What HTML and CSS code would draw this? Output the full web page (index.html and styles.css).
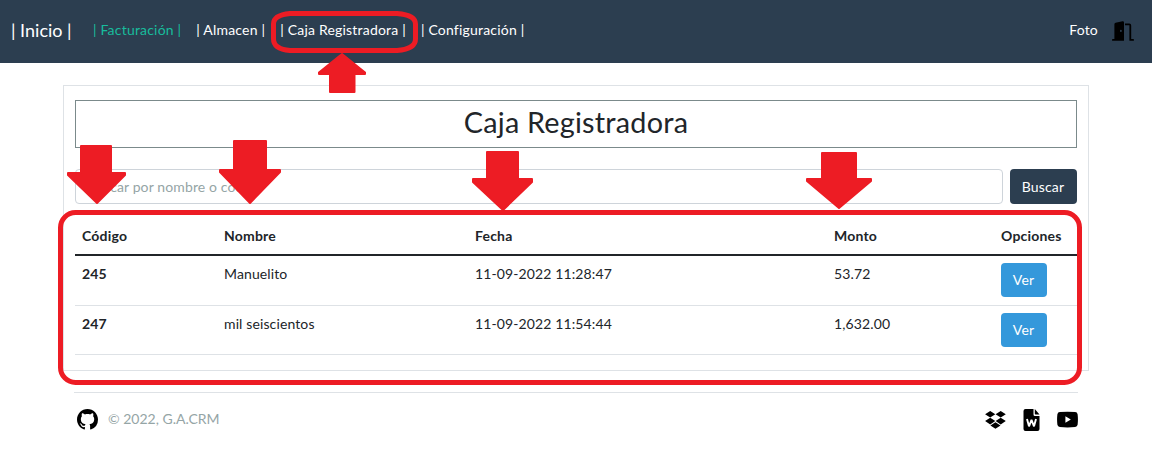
FILE: index.html
```
<!DOCTYPE html>
<html lang="es">
<head>
<meta charset="utf-8">
<title>Caja Registradora</title>
<link rel="stylesheet" href="styles.css">
</head>
<body>
<nav class="navbar">
  <a class="brand">| Inicio |</a>
  <a class="nav-link active">| Facturación |</a>
  <a class="nav-link">| Almacen |</a>
  <a class="nav-link">| Caja Registradora |</a>
  <a class="nav-link">| Configuración |</a>
  <a class="nav-link user">Foto</a>
  <svg class="icon door" viewBox="0 0 22 22"><path fill-rule="evenodd" d="M.8 19H2.400V4.200Q2.400 3 3.600 2.700L10.500 1.200Q12 1 12 2.400V20.800H.8Q0 20.800 0 19.900T.8 19ZM8.900 9.800a.9 1.100 0 1 0 0 2.200a.9 1.100 0 1 0 0-2.200ZM13 3.500H17.300Q19.200 3.500 19.200 5.400V19H21.200Q22 19 22 19.900T21.200 20.800H17.400V5.300H13Z"/></svg>
</nav>
<main class="card">
  <h1 class="title">Caja Registradora</h1>
  <form class="search">
    <input class="field" type="text" placeholder="Buscar por nombre o codigo">
    <button class="btn dark" type="button">Buscar</button>
  </form>
  <table class="table">
    <colgroup><col class="c1"><col class="c2"><col class="c3"><col class="c4"><col class="c5"></colgroup>
    <thead><tr><th>Código</th><th>Nombre</th><th>Fecha</th><th>Monto</th><th>Opciones</th></tr></thead>
    <tbody>
      <tr class="first"><th>245</th><td>Manuelito</td><td>11-09-2022 11:28:47</td><td>53.72</td><td><button class="btn info" type="button">Ver</button></td></tr>
      <tr><th>247</th><td>mil seiscientos</td><td>11-09-2022 11:54:44</td><td>1,632.00</td><td><button class="btn info" type="button">Ver</button></td></tr>
    </tbody>
  </table>
</main>
<footer class="footer">
  <svg class="icon" viewBox="0 0 16 16"><path d="M8 0C3.58 0 0 3.58 0 8c0 3.54 2.29 6.53 5.47 7.59.4.07.55-.17.55-.38 0-.19-.01-.82-.01-1.49-2.01.37-2.53-.49-2.69-.94-.09-.23-.48-.94-.82-1.13-.28-.15-.68-.52-.01-.53.63-.01 1.08.58 1.23.82.72 1.21 1.87.87 2.33.66.07-.52.28-.87.51-1.07-1.78-.2-3.64-.89-3.64-3.95 0-.87.31-1.59.82-2.15-.08-.2-.36-1.02.08-2.12 0 0 .67-.21 2.2.82.64-.18 1.32-.27 2-.27.68 0 1.36.09 2 .27 1.53-1.04 2.2-.82 2.2-.82.44 1.1.16 1.92.08 2.12.51.56.82 1.27.82 2.15 0 3.07-1.87 3.75-3.65 3.95.29.25.54.73.54 1.48 0 1.07-.01 1.93-.01 2.2 0 .21.15.46.55.38A8.012 8.012 0 0 0 16 8c0-4.42-3.58-8-8-8z"/></svg>
  <span class="copy">© 2022, G.A.CRM</span>
  <div class="social">
    <svg class="icon" viewBox="0 0 21 21"><path d="M5.200 1.900 10.300 5.200 5.200 8.500 .1 5.200ZM15.700 1.900 20.800 5.200 15.700 8.500 10.600 5.200ZM5.200 8.800 10.300 12.100 5.200 15.400 .1 12.100ZM15.700 8.800 20.800 12.100 15.700 15.400 10.600 12.100ZM5.400 16.500 10.450 13.200 15.500 16.500 10.450 19.800Z"/></svg>
    <svg class="icon word" viewBox="0 0 16 22"><path d="M2 0H10V5.500Q10 7 11.500 7H16V20Q16 22 14 22H2Q0 22 0 20V2Q0 0 2 0ZM11.300 0 16 5.500H12Q11.300 5.500 11.300 4.700Z"/><path class="letter" d="M3.500 10 5.500 17.300 8 10.800 10.500 17.300 12.500 10"/></svg>
    <svg class="icon" viewBox="0 0 16 16"><path fill-rule="evenodd" d="M2.200 2.350Q8 1.650 13.800 2.350A2 2 0 0 1 15.700 4Q16.200 8 15.700 12a2 2 0 0 1-1.900 1.650Q8 14.350 2.200 13.650A2 2 0 0 1 .3 12Q-.2 8 .3 4A2 2 0 0 1 2.200 2.350ZM6.400 5.500v5l4.150-2.500Z"/></svg>
  </div>
</footer>
<svg class="marks" viewBox="0 0 1152 453">
  <path class="ring" d="M290 13.500H397Q415.500 15 415.500 24V39Q415.500 49 397 50.500H290Q273.500 49 273.500 39V24Q273.500 15 290 13.500Z"/>
  <rect class="ring" x="60.500" y="212.500" width="1019" height="170" rx="15"/>
  <path class="arrow" d="M342 54 365 72.500V74H354.500V92H330V74H319V72.500Z"/>
  <path class="arrow" d="M81 146H111V173H125V175L97 203 68 175V173H81Z"/>
  <path class="arrow" d="M234 141H266V170H280V172L250 203 220 172V170H234Z"/>
  <path class="arrow" d="M487 152H518V179H532V182L503 210 473 182V179H487Z"/>
  <path class="arrow" d="M822 153H856V179H871V181L839 208 807 181V179H822Z"/>
</svg>
</body>
</html>
```
FILE: styles.css
```
* { box-sizing: border-box; }
body {
  margin: 0;
  height: 453px;
  position: relative;
  overflow: hidden;
  background: #fff;
  color: #212529;
  font: 400 14px/21px Lato, sans-serif;
}
.navbar {
  display: flex;
  align-items: center;
  height: 63px;
  padding: 0 18px 4px 11px;
  background: #2c3e50;
  color: #fff;
}
.brand { font-size: 18px; width: 82px; padding-top: 2px; white-space: nowrap; }
.nav-link { margin-right: 15px; white-space: nowrap; letter-spacing: .2px; }
.nav-link.active { color: #18bc9c; }
.nav-link.user { margin-left: auto; margin-right: 14px; }
.icon { width: 21px; height: 21px; flex: none; display: block; }
.door { width: 22px; height: 22px; position: relative; top: 1px; }
.card {
  width: 1026px;
  height: 286px;
  margin: 22px 0 0 63px;
  padding: 14px 11px;
  border: 1px solid #dee2e6;
}
.title {
  margin: 0;
  height: 48px;
  border: 1px solid #7b8a8b;
  font-size: 28.800px;
  font-weight: 400;
  line-height: 43px;
  letter-spacing: .22px;
  text-align: center;
}
.search { display: flex; gap: 7px; margin: 21px 0 14px; }
.field {
  flex: 1;
  height: 35px;
  padding: 0 11px;
  border: 1px solid #ced4da;
  border-radius: 4px;
  font: inherit;
  letter-spacing: .12px;
}
.field::placeholder { color: #95a5a6; opacity: 1; }
.btn {
  display: block;
  height: 35px;
  padding: 0 1px 0 0;
  border: 0;
  border-radius: 4px;
  color: #fff;
  font: inherit;
  letter-spacing: .15px;
}
.dark { width: 67px; background: #2c3e50; }
.info { width: 46px; height: 34px; background: #3498db; }
.table { width: 1002px; border-collapse: collapse; table-layout: fixed; letter-spacing: .12px; }
.c1 { width: 142px; }
.c2 { width: 251px; }
.c3 { width: 359px; }
.c4 { width: 167px; }
.c5 { width: 83px; }
.table th, .table td { padding: 7px; text-align: left; vertical-align: top; }
.table th { font-weight: 700; }
.table thead th { height: 37px; border-bottom: 2px solid #212529; letter-spacing: .2px; }
.table tbody tr { border-bottom: 1px solid #dee2e6; }
.table .first { height: 50px; }
.first .info { padding-bottom: 2px; }
.footer {
  display: flex;
  align-items: center;
  width: 1004px;
  height: 54px;
  margin: 21px 0 0 74px;
  padding-left: 3px;
  border-top: 1px solid #dee2e6;
}
.copy { margin-left: 10px; padding-bottom: 2px; color: #95a5a6; }
.social { display: flex; align-items: center; gap: 15px; margin-left: auto; }
.word { width: 21px; height: 22px; }
.letter { fill: none; stroke: #fff; stroke-width: 1.900; stroke-linejoin: bevel; }
.marks { position: absolute; inset: 0; width: 1152px; height: 453px; pointer-events: none; }
.ring { fill: none; stroke: #ed1c24; stroke-width: 5; }
.arrow { fill: #ed1c24; stroke: #ed1c24; stroke-width: 2; stroke-linejoin: round; }
```
